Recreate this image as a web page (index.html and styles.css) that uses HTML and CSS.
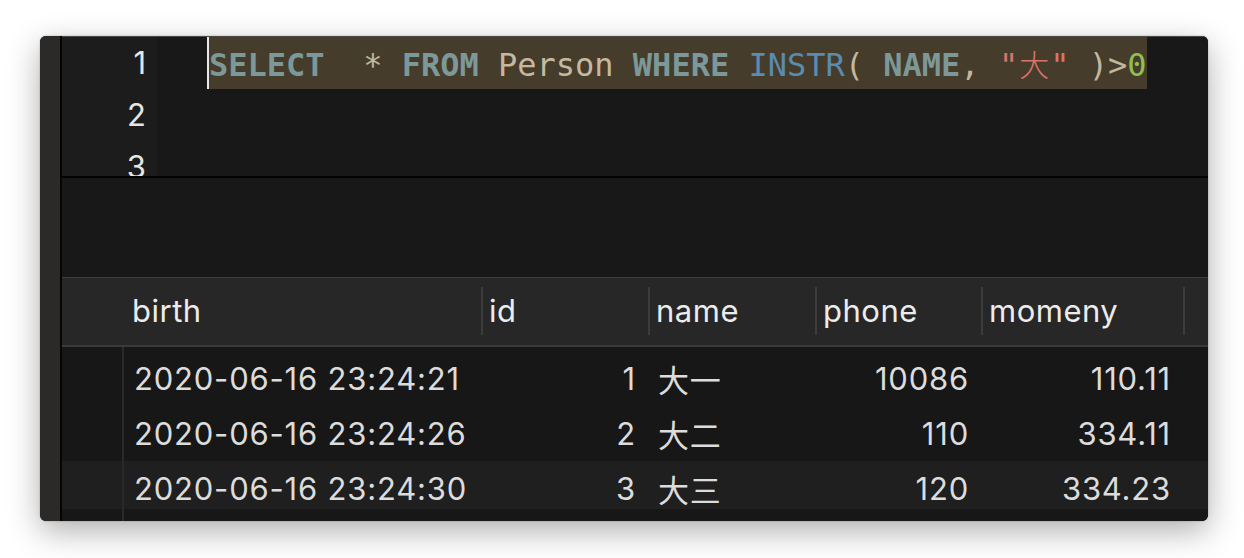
FILE: index.html
```html
<!DOCTYPE html>
<html>
<head>
<meta charset="utf-8">
<link rel="stylesheet" href="styles.css">
</head>
<body>
<div class="window">
  <div class="side"></div>
  <div class="main">
    <div class="editor">
      <div class="gutter">
        <div class="ln">1</div>
        <div class="ln">2</div>
        <div class="ln">3</div>
      </div>
      <div class="code">
        <div class="line"><span class="sel"><span class="kw">SELECT</span>  <span class="op">*</span> <span class="kw">FROM</span> <span class="id">Person</span> <span class="kw">WHERE</span> <span class="fn">INSTR</span><span class="op">(</span> <span class="kw">NAME</span><span class="op">,</span> <span class="str">"<span class="wide">大</span>"</span> <span class="op">)&gt;</span><span class="num">0</span></span></div>
        <div class="line"> </div>
        <div class="line"> </div>
      </div>
    </div>
    <div class="messages"></div>
    <div class="grid-head">
      <div class="hc first"></div>
      <div class="hc">birth</div>
      <div class="hc sep">id</div>
      <div class="hc sep">name</div>
      <div class="hc sep">phone</div>
      <div class="hc sep">momeny</div>
      <div class="hc sep"></div>
    </div>
    <div class="body">
      <div class="rows">
        <div class="row">
          <div class="rn"></div>
          <div class="c">2020-06-16 23:24:21</div>
          <div class="c r">1</div>
          <div class="c">大一</div>
          <div class="c r">10086</div>
          <div class="c r">110.11</div>
          <div class="c"></div>
        </div>
        <div class="row">
          <div class="rn"></div>
          <div class="c">2020-06-16 23:24:26</div>
          <div class="c r">2</div>
          <div class="c">大二</div>
          <div class="c r">110</div>
          <div class="c r">334.11</div>
          <div class="c"></div>
        </div>
        <div class="row alt">
          <div class="rn"></div>
          <div class="c">2020-06-16 23:24:30</div>
          <div class="c r">3</div>
          <div class="c">大三</div>
          <div class="c r">120</div>
          <div class="c r">334.23</div>
          <div class="c"></div>
        </div>
      </div>
    </div>
  </div>
</div>
</body>
</html>
```

FILE: styles.css
```css
html, body {
  margin: 0;
  padding: 0;
  background: #ffffff;
}

body {
  width: 1244px;
  height: 558px;
  overflow: hidden;
  padding-top: 36px;
  box-sizing: border-box;
}

.window {
  margin-left: 40px;
  width: 1168px;
  height: 485px;
  display: flex;
  border-radius: 6px;
  overflow: hidden;
  background: #181818;
  box-shadow: 0 10px 32px rgba(0, 0, 0, 0.32), 0 0 2px rgba(0, 0, 0, 0.3);
}

.side {
  width: 20px;
  background: #2b2a29;
  border-right: 2px solid #050505;
  flex: none;
}

.main {
  flex: 1;
  display: flex;
  flex-direction: column;
  min-width: 0;
}

/* editor */
.editor {
  flex: none;
  display: flex;
  overflow: hidden;
  border-top: 1px solid #4a4844;
  box-sizing: border-box;
  border-bottom: 2px solid #030303;
  height: 142px;
}

.gutter {
  width: 95px;
  flex: none;
  background: #1c1c1c;
  box-sizing: border-box;
  padding-right: 11px;
}

.ln {
  height: 52px;
  line-height: 52px;
  text-align: right;
  font-family: Inter, "Liberation Sans", sans-serif;
  font-size: 31px;
  color: #e6e6e6;
}

.code {
  flex: 1;
  padding-left: 50px;
  background: #181818;
}

.line {
  height: 52px;
  line-height: 52px;
  font-family: "DejaVu Sans Mono", "Liberation Mono", "Noto Sans CJK SC", monospace;
  font-size: 32px;
  white-space: pre;
  color: #c4b9a0;
}

.sel {
  display: inline-block;
  height: 52px;
  background: #463c2b;
  border-left: 2px solid #e8e8e8;
}

.kw {
  color: #7c9898;
  font-weight: bold;
}

.op {
  color: #c2b79f;
}

.id {
  color: #c4b9a0;
}

.fn {
  color: #5a8bb0;
}

.str {
  color: #d8746a;
}

.wide {
  display: inline-block;
  width: 2ch;
  text-align: center;
  font-family: "Noto Sans CJK SC", sans-serif;
  font-size: 30px;
  font-weight: 300;
}

.num {
  color: #8fc04f;
}

/* messages */
.messages {
  height: 99px;
  flex: none;
  background: #181818;
}

/* header */
.grid-head {
  flex: none;
  height: 70px;
  box-sizing: border-box;
  border-top: 1px solid #3d3d3d;
  border-bottom: 2px solid #3a3a3a;
  background: #272727;
  display: grid;
  grid-template-columns: 62px 357px 167px 167px 166px 202px 1fr;
  font-family: Inter, "Liberation Sans", sans-serif;
  font-size: 31px;
  letter-spacing: 0.5px;
  color: #ececec;
}

.hc {
  display: flex;
  align-items: center;
  padding-left: 8px;
  padding-bottom: 2px;
  white-space: nowrap;
}

.hc.first {
  padding-left: 0;
}

.hc.sep {
  padding-left: 0;
}

.hc.sep::before {
  content: "";
  width: 2px;
  height: 48px;
  background: #3c3c3c;
  margin-right: 6px;
  flex: none;
}

/* body */
.body {
  flex: 1;
  padding-top: 4px;
  padding-bottom: 12px;
  background: linear-gradient(to right, transparent 60px, #2a2a2a 60px, #2a2a2a 62px, transparent 62px), #171717;
  overflow: hidden;
  min-height: 0;
}

.rows {
  height: 158px;
  overflow: hidden;
}

.row {
  height: 55px;
  display: grid;
  grid-template-columns: 62px 357px 167px 167px 166px 202px 1fr;
  align-items: center;
  font-family: Inter, "Liberation Sans", "Noto Sans CJK SC", sans-serif;
  font-size: 31px;
  letter-spacing: 0.8px;
  color: #dcdcdc;
}

.row.alt {
  background: #1f1f1f;
}

.rn {
  height: 55px;
  border-right: 2px solid #2a2a2a;
  box-sizing: border-box;
}

.c {
  padding-left: 10px;
  padding-right: 12px;
  white-space: nowrap;
}

.c.r {
  text-align: right;
}
```
